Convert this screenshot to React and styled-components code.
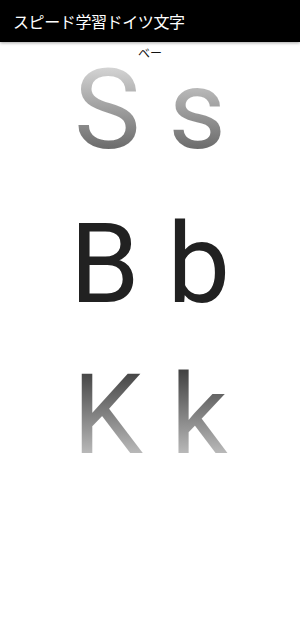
import React from "react";
import styled, { createGlobalStyle } from "styled-components";

const Global = createGlobalStyle`
  html, body { margin: 0; padding: 0; background: #fff; }
  body { font-family: Roboto, "Noto Sans CJK JP", sans-serif; }
`;

const Page = styled.div`
  width: 300px;
  min-height: 617px;
  background: #fff;
  display: flex;
  flex-direction: column;
`;

const Toolbar = styled.header`
  height: 42px;
  background: #000;
  display: flex;
  align-items: center;
  padding-left: 13px;
  box-shadow: 0 1px 3px rgba(0, 0, 0, 0.35);
  position: relative;
  z-index: 1;
`;

const Title = styled.h1`
  margin: 0;
  font-family: "Noto Sans CJK JP", sans-serif;
  font-weight: 400;
  font-size: 16px;
  letter-spacing: -0.4px;
  color: #fff;
  line-height: 1;
`;

const Content = styled.main`
  display: flex;
  flex-direction: column;
  align-items: stretch;
  padding-top: 5px;
`;

const Reading = styled.div`
  font-family: "Noto Sans CJK JP", sans-serif;
  font-size: 12px;
  line-height: 12px;
  height: 12px;
  text-align: center;
  color: #111;
`;

const LetterRow = styled.div`
  font-family: Roboto, sans-serif;
  font-size: 112px;
  line-height: 92px;
  height: 92px;
  text-align: center;
  white-space: pre;
  margin-top: ${(p) => p.$top}px;
  color: ${(p) => p.$solid || "transparent"};
  ${(p) =>
    p.$gradient &&
    `
    background: linear-gradient(180deg, ${p.$gradient[0]} 0%, ${p.$gradient[1]} 100%);
    -webkit-background-clip: text;
    background-clip: text;
    -webkit-text-fill-color: transparent;
  `}
`;

export default function App() {
  return (
    <>
      <Global />
      <Page>
        <Toolbar>
          <Title>スピード学習ドイツ文字</Title>
        </Toolbar>
        <Content>
          <Reading>ベー</Reading>
          <LetterRow $top={5} $gradient={["#d8d8d8", "#626262"]}>
            S s
          </LetterRow>
          <LetterRow $top={62} $solid="#212121">
            B b
          </LetterRow>
          <LetterRow $top={59} $gradient={["#404040", "#c4c4c4"]}>
            K k
          </LetterRow>
        </Content>
      </Page>
    </>
  );
}
